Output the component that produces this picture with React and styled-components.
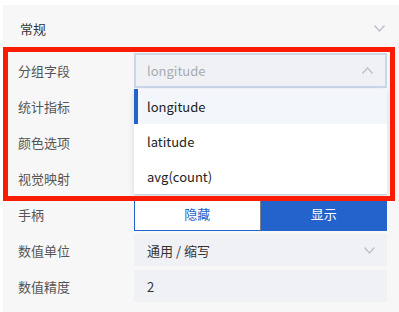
import styled, { createGlobalStyle } from "styled-components";

const GlobalStyle = createGlobalStyle`
  body {
    margin: 0;
    background: #ffffff;
    font-family: "Noto Sans CJK SC", "Noto Sans", sans-serif;
  }
`;

const Page = styled.div`
  position: relative;
  width: 399px;
  height: 312px;
  overflow: hidden;
  background: #ffffff;
`;

const Panel = styled.div`
  margin: 5px 0 0 3px;
  height: 307px;
  background: #f7f7f8;
`;

const Header = styled.div`
  height: 47px;
  display: flex;
  align-items: center;
  justify-content: space-between;
  padding: 0 14px 0 17px;
  font-size: 13px;
  color: #333;
`;

const Rows = styled.div`
  display: flex;
  flex-direction: column;
`;

const Row = styled.div`
  height: 36px;
  display: grid;
  grid-template-columns: 131px 253px;
  align-items: center;
`;

const Label = styled.div`
  padding-left: 15px;
  font-size: 13px;
  color: #555;
`;

const Field = styled.div`
  position: relative;
  box-sizing: border-box;
  height: ${(p) => (p.$open ? "35px" : "32px")};
  display: flex;
  align-items: center;
  justify-content: space-between;
  padding: 0 12px 0 ${(p) => (p.$open ? "11px" : "13px")};
  background: #f0f1f5;
  border: ${(p) => (p.$open ? "2px solid #cbd6ea" : "none")};
  font-size: 13px;
  color: ${(p) => (p.$muted ? "#a9abb2" : "#333")};
`;

const Menu = styled.div`
  position: absolute;
  top: 34px;
  left: -2px;
  width: 253px;
  background: #ffffff;
  box-shadow: 0 2px 6px rgba(0, 0, 0, 0.12);
  border-bottom: 1px solid #c9d3e6;
  z-index: 2;
`;

const Option = styled.div`
  height: 35px;
  display: flex;
  align-items: center;
  box-sizing: border-box;
  padding-left: 9px;
  font-size: 13px;
  color: #222;
  background: ${(p) => (p.$active ? "#f3f6fa" : "#ffffff")};
  border-left: 4px solid ${(p) => (p.$active ? "#2462cc" : "transparent")};
`;

const Toggle = styled.div`
  display: grid;
  grid-template-columns: 1fr 1fr;
  height: 35px;
  margin-top: -1px;
`;

const ToggleButton = styled.div`
  display: flex;
  align-items: center;
  justify-content: center;
  font-size: 13px;
  box-sizing: border-box;
  color: ${(p) => (p.$active ? "#ffffff" : "#2462cc")};
  background: ${(p) => (p.$active ? "#2462cc" : "#ffffff")};
  border: 1px solid #2462cc;
  border-right: ${(p) => (p.$active ? "1px solid #2462cc" : "1px solid #7a7f8c")};
`;

const Highlight = styled.div`
  position: absolute;
  left: 3px;
  top: 47px;
  width: 392px;
  height: 154px;
  box-sizing: border-box;
  border: 5px solid #fb1c06;
  z-index: 5;
  pointer-events: none;
`;

function Chevron({ up }) {
  return (
    <svg width="11" height="7" viewBox="0 0 11 7">
      <polyline
        points={up ? "0.5,6.5 5.5,1 10.5,6.5" : "0.5,0.5 5.5,6 10.5,0.5"}
        fill="none"
        stroke="#b9bdc7"
        strokeWidth="1.2"
      />
    </svg>
  );
}

const options = ["longitude", "latitude", "avg(count)"];

export default function App() {
  return (
    <Page>
      <GlobalStyle />
      <Panel>
        <Header>
          <span>常规</span>
          <Chevron />
        </Header>
        <Rows>
          <Row>
            <Label>分组字段</Label>
            <Field $open $muted>
              <span>longitude</span>
              <Chevron up />
              <Menu>
                {options.map((o, i) => (
                  <Option key={o} $active={i === 0}>
                    {o}
                  </Option>
                ))}
              </Menu>
            </Field>
          </Row>
          <Row>
            <Label>统计指标</Label>
          </Row>
          <Row>
            <Label>颜色选项</Label>
          </Row>
          <Row>
            <Label>视觉映射</Label>
          </Row>
          <Row>
            <Label>手柄</Label>
            <Toggle>
              <ToggleButton>隐藏</ToggleButton>
              <ToggleButton $active>显示</ToggleButton>
            </Toggle>
          </Row>
          <Row>
            <Label>数值单位</Label>
            <Field>
              <span>通用 / 缩写</span>
              <Chevron />
            </Field>
          </Row>
          <Row>
            <Label>数值精度</Label>
            <Field>
              <span>2</span>
            </Field>
          </Row>
        </Rows>
      </Panel>
      <Highlight />
    </Page>
  );
}
